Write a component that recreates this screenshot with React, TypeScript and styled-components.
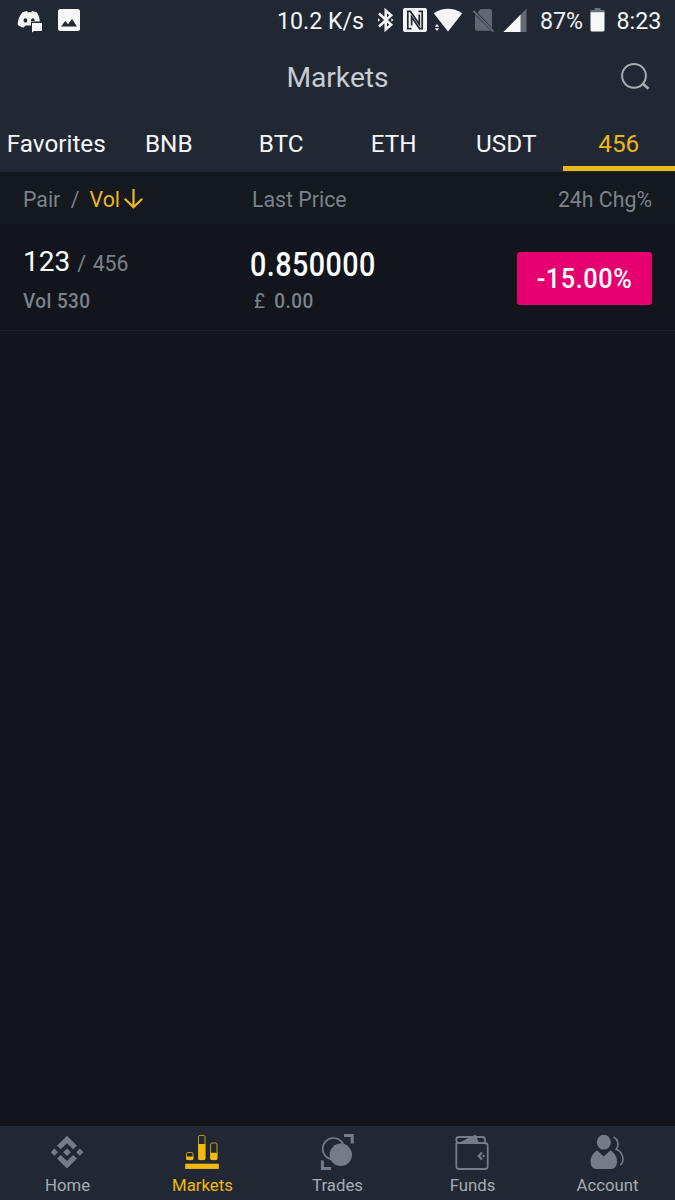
import React from "react";
import styled, { createGlobalStyle } from "styled-components";

const GlobalStyle = createGlobalStyle`
  * { box-sizing: border-box; }
  body { margin: 0; background: #12161c; }
`;

const Screen = styled.div`
  width: 675px;
  height: 1200px;
  display: flex;
  flex-direction: column;
  background: #12161c;
  font-family: Roboto, "Liberation Sans", sans-serif;
  overflow: hidden;
  white-space: nowrap;
`;

const Header = styled.header`
  background: #212833;
  height: 172px;
  flex: none;
  display: flex;
  flex-direction: column;
`;

const StatusBar = styled.div`
  height: 40px;
  display: flex;
  justify-content: space-between;
  padding: 0 13px 0 17px;
  svg { display: block; flex: none; }
`;

const StatusGroup = styled.div<{ $gap?: number }>`
  display: flex;
  gap: ${(p) => p.$gap ?? 0}px;
`;

const StatusText = styled.span<{ $w: number; $left?: number }>`
  color: #f4f5f6;
  font-size: 23.2px;
  line-height: 28px;
  padding: 7px 0 0 ${(p) => p.$left ?? 0}px;
  width: ${(p) => p.$w}px;
`;

const TitleBar = styled.div`
  height: 76px;
  display: grid;
  grid-template-columns: 80px 1fr 80px;
  align-items: center;
`;

const Title = styled.h1`
  grid-column: 2;
  margin: 0;
  text-align: center;
  font-size: 28.2px;
  line-height: 34px;
  font-weight: 400;
  color: #c9ccd1;
`;

const SearchButton = styled.button`
  border: 0;
  background: none;
  padding: 0;
  margin: -2px 0 0 25px;
  width: 30px;
  height: 30px;
  svg { display: block; }
`;

const Tabs = styled.nav`
  display: grid;
  grid-template-columns: repeat(6, 1fr);
  height: 56px;
`;

const Tab = styled.div<{ $active?: boolean }>`
  margin-bottom: 1px;
  border-bottom: 5px solid ${(p) => (p.$active ? "#ebb71c" : "transparent")};
  color: ${(p) => (p.$active ? "#ebb71c" : "#f5f6f7")};
  text-align: center;
  font-size: 24.3px;
  line-height: 28px;
  padding-top: 14px;
`;

const Columns = styled.div`
  display: grid;
  grid-template-columns: 229px 1fr auto;
  padding: 0 23px;
`;

const ColumnHeads = styled(Columns)`
  background: #14181f;
  height: 53px;
  align-items: center;
  padding-top: 2px;
  color: #7c828d;
  font-size: 21.3px;
  line-height: 26px;
`;

const SortHead = styled.div`
  display: flex;
  align-items: center;
`;

const Slash = styled.span`
  margin: 0 10px 0 10.5px;
`;

const SortKey = styled.span`
  color: #ebb71c;
  display: flex;
  align-items: center;
  gap: 4px;
  svg { margin-top: -2px; }
`;

const PairRow = styled(Columns)`
  height: 106px;
  border-bottom: 1px solid #1c2129;
  grid-template-columns: 227px 1fr auto;
`;

const PairName = styled.div`
  display: flex;
  align-items: baseline;
  color: #fff;
  font-size: 28px;
  line-height: 34px;
  padding-top: 20px;
`;

const Quote = styled.span`
  color: #7c828d;
  font-size: 21.2px;
  margin-left: 7px;
  word-spacing: 1.5px;
`;

/* Figures are set narrow with slightly open tracking */
const Figures = styled.div`
  font-weight: 500;
  letter-spacing: 0.5px;
  transform: scaleX(0.91);
  transform-origin: 0 0;
`;

const SubText = styled(Figures)<{ $top: number; $left?: number; $space?: number }>`
  color: #7c828d;
  font-size: 20.8px;
  line-height: 24px;
  margin: ${(p) => p.$top}px 0 0 ${(p) => p.$left ?? 0}px;
  word-spacing: ${(p) => p.$space ?? 0}px;
`;

const Currency = styled.span`
  font-weight: 400;
`;

const Price = styled(Figures)`
  color: #fff;
  font-size: 32.4px;
  line-height: 38px;
  padding-top: 21px;
  letter-spacing: 0.5px;
  transform: scaleX(0.886);
`;

const Change = styled.div`
  width: 135px;
  height: 53px;
  margin-top: 26.5px;
  border-radius: 3px;
  background: #e6006f;
  color: #fff;
  display: flex;
  align-items: center;
  justify-content: center;
`;

const ChangeText = styled(Figures)`
  font-size: 27.8px;
  line-height: 34px;
  letter-spacing: 0.6px;
  margin: 2px -1px 0 0;
  transform-origin: 50% 0;
`;

const BottomNav = styled.nav`
  margin-top: auto;
  height: 74px;
  background: #212833;
  display: grid;
  grid-template-columns: repeat(5, 1fr);
`;

const NavItem = styled.div<{ $active?: boolean }>`
  color: ${(p) => (p.$active ? "#f0b90b" : "#767c87")};
  display: flex;
  flex-direction: column;
  align-items: center;
  padding-top: 7px;
  svg { display: block; margin-right: 1px; }
`;

const NavLabel = styled.span<{ $active?: boolean }>`
  color: ${(p) => (p.$active ? "#f0b90b" : "#a5abb5")};
  font-size: 16.8px;
  line-height: 20px;
  margin-top: 2px;
`;

const ChatIcon = () => (
  <svg width="30" height="40" viewBox="17 0 30 40">
    <path fill="#f4f5f6" fillRule="evenodd" d="M22.5 12.2 L27 11 L27.6 12.3 H31.4 L32 11 L36.7 12.2 C38.6 14.6 39.6 17.6 39.8 21.6 H31 V25.5 H25.5 L23.8 27.6 C21 27.2 19.2 26.3 17.8 24.8 C17.7 20 19.8 15 22.5 12.2Z M25.4 18.2a1.9 2.2 0 1 0 0 4.4a1.9 2.2 0 1 0 0-4.4Z M33 18.2a1.9 2.2 0 0 0-1.9 2.7v1h3.6C35.1 20 34.2 18.2 33 18.2Z" />
    <path fill="#f4f5f6" d="M32 23 H42 V31 H34 L32 32.5Z" />
  </svg>
);

const ImageIcon = () => (
  <svg width="24" height="40" viewBox="57 0 24 40">
    <rect x="58" y="9" width="22" height="22" rx="2.5" fill="#f7f8f8" />
    <path fill="#212833" d="M61 26.5 L65.3 21 L68 24.2 L72 19 L77 26.5Z" />
  </svg>
);

const SignalIcons = () => (
  <svg width="152" height="40" viewBox="376 0 152 40" fill="none">
    <path d="M379 13.5 L391.2 24.8 L385.7 29.5 V10.5 L391.2 15.2 L379 26.5" stroke="#f4f5f6" strokeWidth="2.5" />
    <path d="M378 18.3 L380.2 20 L378 21.7Z M391.3 18.3 L393.5 20 L391.3 21.7Z" fill="#f4f5f6" />
    <rect x="403" y="8" width="24" height="24" rx="2" fill="#f4f5f6" />
    <path d="M411.5 28.6 H407.8 V11.4 H410.4 L419.3 24.2 V14.5 M418.5 11.4 H422.2 V28.6 H419.6 L411.6 17 V25.5" stroke="#212833" strokeWidth="1.7" />
    <path d="M433.7 13.2 Q448 4.5 462.3 13.2 L448 31.5Z" fill="#f4f5f6" />
    <path d="M434.8 26.8 L437 24 L439.2 26.8Z M434.8 28.3 H439.2 L437 31Z" fill="#f4f5f6" />
    <path d="M480.5 9 H490 Q492 9 492 11 V28 L477.5 12.5Z M475 14.8 L491 30.8 H477 Q475 30.8 475 28.8Z" fill="#626873" />
    <path d="M473.5 11 L493.5 31.5" stroke="#626873" strokeWidth="1.8" />
    <path d="M503.5 32 L526.5 8.5 V32Z" fill="#646a74" />
    <path d="M503.5 32 L520.5 14.8 V32Z" fill="#f7f8f8" />
  </svg>
);

const BatteryIcon = () => (
  <svg width="16" height="40" viewBox="590 0 16 40">
    <path d="M594.5 8 H600.5 V10 H604.5 V13 H590.5 V10 H594.5Z" fill="#6b717b" />
    <path d="M590.5 12.3 H604.5 V30 Q604.5 31.5 603 31.5 H592 Q590.5 31.5 590.5 30Z" fill="#f7f8f8" />
  </svg>
);

const SearchIcon = () => (
  <svg width="30" height="30" viewBox="620 62 30 30" fill="none" stroke="#a8acb2" strokeWidth="2">
    <circle cx="634" cy="75.8" r="11.9" />
    <path d="M642.3 83.2 L648.5 88.8" strokeWidth="2.6" />
  </svg>
);

const ArrowDown = () => (
  <svg width="19" height="20" viewBox="0 0 19 20" fill="none" stroke="currentColor" strokeWidth="2.2">
    <path d="M9.5 0 V18 M0.8 9.8 L9.5 18.2 L18.2 9.8" />
  </svg>
);

const HomeIcon = () => (
  <svg width="40" height="40" viewBox="47 1133 40 40" fill="currentColor">
    <path d="M67 1135.8 L77 1145.8 L73.2 1149.3 L67 1143.3 L60.8 1149.3 L57 1145.8Z" />
    <path d="M67 1168.6 L57 1158.6 L60.8 1155 L67 1161 L73.2 1155 L77 1158.6Z" />
    <path d="M67 1148.4 L70.8 1152.2 L67 1156 L63.2 1152.2Z M54.4 1148.6 L58 1152.2 L54.4 1155.8 L50.8 1152.2Z M79.8 1148.6 L83.4 1152.2 L79.8 1155.8 L76.2 1152.2Z" />
  </svg>
);

const MarketsIcon = () => (
  <svg width="40" height="40" viewBox="182 1133 40 40" fill="currentColor">
    <rect x="185.2" y="1163.7" width="33.6" height="5.2" />
    <g fill="none" stroke="currentColor" strokeWidth="0.8">
      <rect x="186.5" y="1152.5" width="6.5" height="7.2" rx="1.3" />
      <rect x="198.5" y="1135.4" width="6.5" height="24.3" rx="1.5" />
      <rect x="210.6" y="1143" width="6.4" height="16.7" rx="1.5" />
    </g>
    <path d="M186.2 1156.4 H193.3 V1158.5 Q193.3 1160 191.8 1160 H187.7 Q186.2 1160 186.2 1158.5Z M198.2 1144 H205.3 V1158.5 Q205.3 1160 203.8 1160 H199.7 Q198.2 1160 198.2 1158.5Z M210.3 1152.7 H217.3 V1158.5 Q217.3 1160 215.8 1160 H211.8 Q210.3 1160 210.3 1158.5Z" />
  </svg>
);

const TradesIcon = () => (
  <svg width="40" height="40" viewBox="317 1133 40 40" fill="none" stroke="currentColor">
    <circle cx="333.5" cy="1148.8" r="10.8" strokeWidth="1.6" />
    <circle cx="340.8" cy="1154.8" r="11.2" fill="currentColor" stroke="none" />
    <path d="M344 1135.5 H352.2 V1143.5 M322.4 1160.5 V1168.4 H331" strokeWidth="3" />
  </svg>
);

const FundsIcon = () => (
  <svg width="40" height="40" viewBox="452 1133 40 40" fill="none" stroke="currentColor">
    <path d="M456.3 1143 V1166.2 Q456.3 1169 459 1169 H485 Q487.7 1169 487.7 1166.2 V1145.8 Q487.7 1143 485 1143 H459 Q456.3 1143 456.3 1140 V1139.4 Q456.3 1137 459 1137 H482.5 Q485 1137 485 1139.5 V1143" strokeWidth="1.8" />
    <path d="M458.5 1143 L475.5 1134.6 L479 1143Z" fill="currentColor" stroke="none" />
    <path d="M482 1152.6 L478.8 1156 L482 1159.4" strokeWidth="2.2" />
    <path d="M483.6 1154.4 L485.2 1156 L483.6 1157.6 L482 1156Z" fill="currentColor" stroke="none" />
  </svg>
);

const AccountIcon = () => (
  <svg width="40" height="40" viewBox="587 1133 40 40" fill="currentColor">
    <ellipse cx="603.8" cy="1142.2" rx="7" ry="7.4" />
    <path d="M597 1150.3 L603.8 1156.5 L610.5 1150.3 C615 1153.2 617.2 1157.5 617 1162 C616.8 1166.5 614.5 1169 610.5 1169 H597 C593 1169 590.7 1166.5 590.6 1162 C590.5 1157.5 592.7 1153.2 597 1150.3Z" />
    <path d="M613.5 1137.3 C617.5 1138.5 619.8 1144.5 616.2 1149.3 C622.3 1151.5 625.5 1160 620.3 1165.3" fill="none" stroke="currentColor" strokeWidth="1.5" />
  </svg>
);

const tabs = ["Favorites", "BNB", "BTC", "ETH", "USDT", "456"];

const navItems = [
  { label: "Home", Icon: HomeIcon },
  { label: "Markets", Icon: MarketsIcon, active: true },
  { label: "Trades", Icon: TradesIcon },
  { label: "Funds", Icon: FundsIcon },
  { label: "Account", Icon: AccountIcon },
];

export default function App() {
  return (
    <Screen>
      <GlobalStyle />
      <Header>
        <StatusBar>
          <StatusGroup $gap={10}>
            <ChatIcon />
            <ImageIcon />
          </StatusGroup>
          <StatusGroup>
            <StatusText $w={99}>10.2 K/s</StatusText>
            <SignalIcons />
            <StatusText $w={62} $left={12}>87%</StatusText>
            <BatteryIcon />
            <StatusText $w={56} $left={10.5}>8:23</StatusText>
          </StatusGroup>
        </StatusBar>
        <TitleBar>
          <Title>Markets</Title>
          <SearchButton aria-label="Search">
            <SearchIcon />
          </SearchButton>
        </TitleBar>
        <Tabs>
          {tabs.map((t) => (
            <Tab key={t} $active={t === "456"}>{t}</Tab>
          ))}
        </Tabs>
      </Header>
      <ColumnHeads>
        <SortHead>
          Pair<Slash>/</Slash>
          <SortKey>Vol<ArrowDown /></SortKey>
        </SortHead>
        <span>Last Price</span>
        <span>24h Chg%</span>
      </ColumnHeads>
      <PairRow>
        <div>
          <PairName>123<Quote>/ 456</Quote></PairName>
          <SubText $top={8}>Vol 530</SubText>
        </div>
        <div>
          <Price>0.850000</Price>
          <SubText $top={5} $left={4} $space={4}><Currency>£</Currency> 0.00</SubText>
        </div>
        <Change><ChangeText>-15.00%</ChangeText></Change>
      </PairRow>
      <BottomNav>
        {navItems.map(({ label, Icon, active }) => (
          <NavItem key={label} $active={active}>
            <Icon />
            <NavLabel $active={active}>{label}</NavLabel>
          </NavItem>
        ))}
      </BottomNav>
    </Screen>
  );
}
